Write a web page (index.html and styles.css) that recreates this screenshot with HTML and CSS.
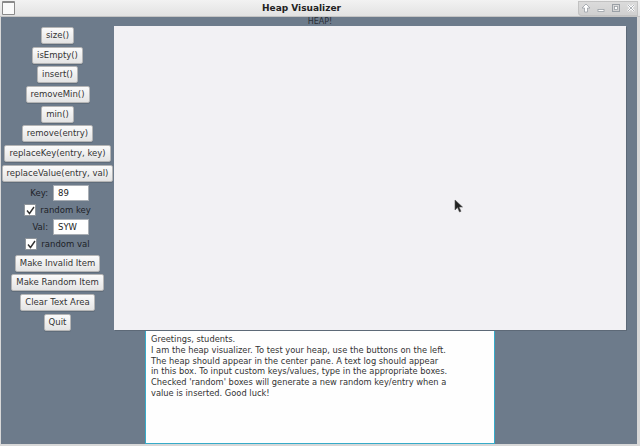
FILE: index.html
```html
<!DOCTYPE html>
<html>
<head>
<meta charset="utf-8">
<link rel="stylesheet" href="styles.css">
</head>
<body>
<div class="window">
  <div class="titlebar">
    <div class="app-icon"></div>
    <div class="title">Heap Visualizer</div>
    <div class="wm-buttons">
      <svg width="10" height="10" viewBox="0 0 10 10"><path d="M5 1 L9 5 H6.5 V9 H3.5 V5 H1 Z" fill="#fff" stroke="#9aa0a6" stroke-width="0.8"/></svg>
      <svg width="10" height="10" viewBox="0 0 10 10"><rect x="2" y="6.5" width="6" height="2" fill="#fff" stroke="#9aa0a6" stroke-width="0.8"/></svg>
      <svg width="10" height="10" viewBox="0 0 10 10"><rect x="1.5" y="1.5" width="7" height="7" fill="none" stroke="#9aa0a6" stroke-width="1"/><rect x="3.5" y="3.5" width="3" height="3" fill="#fff" stroke="#9aa0a6" stroke-width="0.8"/></svg>
      <svg width="10" height="10" viewBox="0 0 10 10"><path d="M2 2 L8 8 M8 2 L2 8" stroke="#fff" stroke-width="2.4"/><path d="M2 2 L8 8 M8 2 L2 8" stroke="#9aa0a6" stroke-width="0.8"/></svg>
    </div>
  </div>
  <div class="content">
    <div class="heap-label">HEAP!</div>
    <div class="middle">
      <div class="controls">
        <button class="btn">size()</button>
        <button class="btn">isEmpty()</button>
        <button class="btn">insert()</button>
        <button class="btn">removeMin()</button>
        <button class="btn">min()</button>
        <button class="btn">remove(entry)</button>
        <button class="btn">replaceKey(entry, key)</button>
        <button class="btn">replaceValue(entry, val)</button>
        <div class="field-row"><span class="lbl">Key:</span><span class="field">89</span></div>
        <div class="check-row"><span class="box"><svg width="9" height="9" viewBox="0 0 9 9"><path d="M1 4.5 L3.5 7.5 L8 1" fill="none" stroke="#333" stroke-width="1.4"/></svg></span>random key</div>
        <div class="field-row"><span class="lbl">Val:</span><span class="field">SYW</span></div>
        <div class="check-row"><span class="box"><svg width="9" height="9" viewBox="0 0 9 9"><path d="M1 4.5 L3.5 7.5 L8 1" fill="none" stroke="#333" stroke-width="1.4"/></svg></span>random val</div>
        <div class="spacer"></div>
        <button class="btn">Make Invalid Item</button>
        <button class="btn">Make Random Item</button>
        <button class="btn">Clear Text Area</button>
        <button class="btn">Quit</button>
      </div>
      <div class="heap-panel">
        <svg class="cursor" width="10" height="14" viewBox="0 0 10 14"><path d="M1 1 L1 11 L3.5 8.5 L5.5 13 L7 12.3 L5 8 L8.5 8 Z" fill="#222" stroke="#555" stroke-width="0.6"/></svg>
      </div>
    </div>
    <div class="log">Greetings, students.
I am the heap visualizer. To test your heap, use the buttons on the left.
The heap should appear in the center pane. A text log should appear
in this box. To input custom keys/values, type in the appropriate boxes.
Checked 'random' boxes will generate a new random key/entry when a
value is inserted. Good luck!</div>
  </div>
</div>
</body>
</html>
```

FILE: styles.css
```css
html, body {
  margin: 0;
  padding: 0;
  width: 640px;
  height: 446px;
  overflow: hidden;
  font-family: "DejaVu Sans", sans-serif;
}
.window {
  width: 640px;
  height: 446px;
  display: flex;
  flex-direction: column;
  background: #d8d8d8;
}
.titlebar {
  height: 17px;
  flex: none;
  display: flex;
  align-items: center;
  background: linear-gradient(#f2f2f2, #e2e2e2);
  border-bottom: 1px solid #c4c4c4;
  box-sizing: border-box;
  position: relative;
}
.app-icon {
  width: 11px;
  height: 11px;
  margin-left: 2px;
  border: 1px solid #8a8a8a;
  border-top: 2px solid #8a8a8a;
  background: #fafafa;
  border-radius: 1px;
}
.title {
  flex: 1;
  text-align: center;
  font-weight: bold;
  font-size: 9px;
  color: #222;
  margin-left: 10px;
}
.wm-buttons {
  width: 60px;
  height: 15px;
  margin-right: 2px;
  display: flex;
  align-items: center;
  justify-content: space-around;
  background: linear-gradient(#dcdcdc, #cfcfcf);
  border-radius: 0 0 0 4px;
  box-shadow: inset 0 0 0 1px #c2c2c2;
}
.content {
  flex: 1;
  background: #6d7b8b;
  margin: 0 3px 2px 1px;
  display: flex;
  flex-direction: column;
  position: relative;
}
.heap-label {
  height: 9px;
  flex: none;
  font-size: 8px;
  line-height: 9px;
  text-align: center;
  color: #2a2f36;
  margin-left: 2px;
}
.middle {
  display: flex;
  height: 304px;
  flex: none;
}
.controls {
  width: 113px;
  flex: none;
  display: flex;
  flex-direction: column;
  align-items: center;
  padding-top: 1px;
}
.controls > * {
  flex: none;
}
.btn {
  font-family: "DejaVu Sans", sans-serif;
  font-size: 8.5px;
  height: 17px;
  padding: 0 4px;
  margin: 0 0 2.7px 0;
  color: #333;
  background: linear-gradient(#fbfbfb, #e4e4e4);
  border: 1px solid #b5b5b5;
  border-radius: 2px;
  box-shadow: 0 1px 0 rgba(0,0,0,0.12);
  line-height: 15px;
  white-space: nowrap;
}
.field-row {
  display: flex;
  align-items: center;
  height: 17px;
  font-size: 8.5px;
}
.lbl {
  color: #1d2228;
  width: 23px;
  text-align: right;
  margin-right: 5px;
  margin-left: -1px;
}
.field {
  width: 30px;
  height: 14px;
  background: #fff;
  border: 1px solid #a9aeb4;
  color: #222;
  font-size: 8.5px;
  line-height: 14px;
  padding-left: 4px;
}
.check-row {
  display: flex;
  align-items: center;
  height: 17px;
  font-size: 8.5px;
  color: #1d2228;
}
.box {
  width: 10px;
  height: 10px;
  background: #fff;
  border: 1px solid #8f959b;
  margin-right: 4px;
  display: flex;
  align-items: center;
  justify-content: center;
}
.spacer {
  height: 2px;
}
.heap-panel {
  width: 512px;
  height: 304px;
  flex: none;
  background: #f2f1f4;
  position: relative;
  box-shadow: 1px 1px 0 #5d6977;
}
.cursor {
  position: absolute;
  left: 340px;
  top: 173px;
}
.log {
  margin-left: 144px;
  flex: none;
  background: #fefefe;
  border: 1px solid #36abc9;
  font-size: 8.3px;
  line-height: 10.8px;
  color: #333;
  white-space: pre;
  padding: 3px 5px;
  box-sizing: border-box;
  width: 350px;
  height: 114px;
}
```
